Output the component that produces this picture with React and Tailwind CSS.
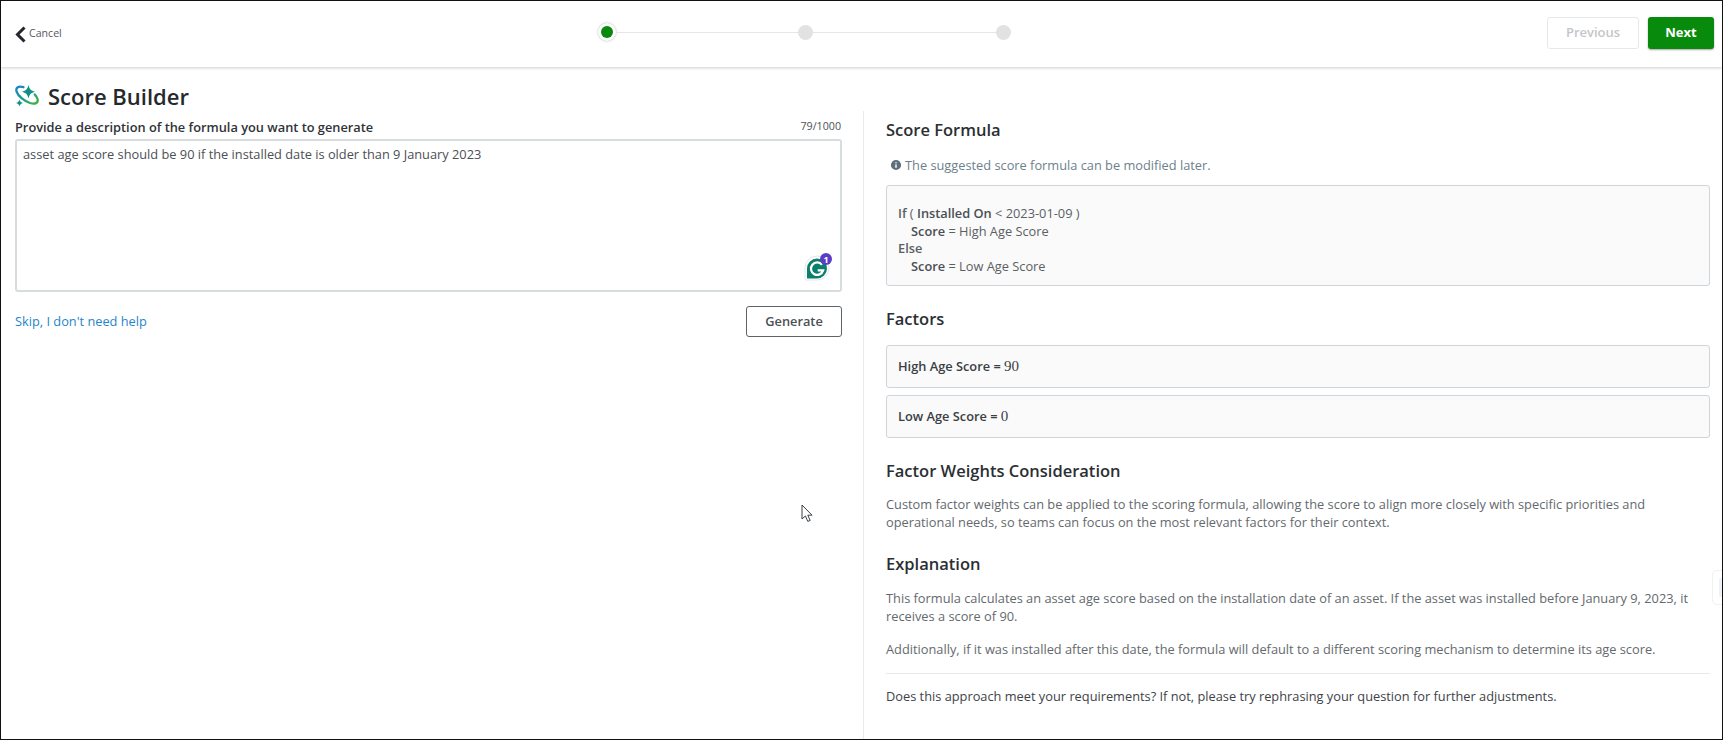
import React from 'react';
import { Info } from 'lucide-react';

const font = { fontFamily: '"Open Sans", "Noto Sans", sans-serif' };

const ScoreIcon = () => (
  <svg width="24" height="24" viewBox="0 0 24 24" className="shrink-0">
    <defs>
      <linearGradient id="ring" x1="0" y1="0" x2="1" y2="1">
        <stop offset="0" stopColor="#1b82cc" />
        <stop offset="0.5" stopColor="#17a08a" />
        <stop offset="1" stopColor="#45b03a" />
      </linearGradient>
    </defs>
    <path d="M8.5 3.2C3.5 1.4 0.4 3.6 1.6 7.6 3 12 9 17 15 19c5 1.5 8.5 0.2 7.6-3.8-.4-1.6-1.4-3.2-2.8-4.8" fill="none" stroke="url(#ring)" strokeWidth="2.3" strokeLinecap="round" />
    <path d="M13.5 1c.7 3.8 2.4 5.7 6.5 6.8-4 1-5.8 3-6.5 6.7-.8-3.7-2.5-5.7-6.5-6.7 4-1.1 5.7-3 6.5-6.8z" fill="#128f84" />
    <path d="M4.5 15.5c.4 2 1.4 3 3.5 3.5-2.1.5-3.1 1.5-3.5 3.5-.4-2-1.4-3-3.5-3.5 2.1-.5 3.1-1.5 3.5-3.5z" fill="#128f84" />
  </svg>
);

const GrammarlyBadge = () => (
  <div className="absolute bottom-[9px] right-[9px] h-[29px] w-[28px]">
    <svg width="28" height="29" viewBox="0 0 28 29">
      <path d="M2 27V16A12 12 0 0 1 26 16A12 12 0 0 1 14 28H3a1 1 0 0 1-1-1z" fill="#fff" stroke="#e3e6e8" strokeWidth="1" />
      <path d="M4 26V16.5A10 10 0 1 1 14 26.5H4.5a.5.5 0 0 1-.5-.5z" fill="#0c7f6a" />
      <path d="M19 12.8a6.2 6.2 0 1 0 1.1 5.6h-5.4" fill="none" stroke="#fff" strokeWidth="2.3" />
    </svg>
    <span className="absolute right-[-1px] top-[1px] flex h-[12px] w-[12px] items-center justify-center rounded-full bg-[#5a3fc6] text-[9px] font-bold leading-none text-white">1</span>
  </div>
);

const Heading = ({ children, className = '' }) => (
  <h2 className={`text-[16.5px] font-semibold leading-[22px] text-[#2b2f33] ${className}`}>{children}</h2>
);

const FactorBox = ({ label, value }) => (
  <div className="flex h-[43px] items-center rounded-[3px] border border-[#ced4d9] bg-[#fafafa] px-[11px] text-[12.8px] font-semibold text-[#3a3f44]">
    {label} =&nbsp;
    <span className="text-[15px] font-normal" style={{ fontFamily: '"Liberation Serif", serif' }}>{value}</span>
  </div>
);

export default function App() {
  return (
    <div className="relative h-[740px] w-[1723px] overflow-hidden border border-[#111] bg-white" style={font}>
      {/* Header */}
      <header className="relative flex h-[66px] items-center justify-between pl-[14px] pr-[8px] shadow-[0_1px_3px_rgba(0,0,0,0.2)]">
        <div className="flex items-center text-[10.6px] text-[#55595d]">
          <svg width="11" height="17" viewBox="0 0 11 17" className="mr-[3px]">
            <path d="M9.5 1.5L2.5 8.5L9.5 15.5" fill="none" stroke="#23272b" strokeWidth="3" />
          </svg>
          Cancel
        </div>
        <div className="absolute left-[597px] top-[22px] flex items-center">
          <div className="flex h-[18px] w-[18px] items-center justify-center rounded-full bg-white shadow-[0_0_2px_rgba(0,0,0,0.35)]">
            <div className="h-[12px] w-[12px] rounded-full bg-[#088a0c]" />
          </div>
          <div className="h-[1px] w-[182px] bg-[#e6e6e6]" />
          <div className="h-[15px] w-[15px] rounded-full bg-[#e2e2e2]" />
          <div className="h-[1px] w-[183px] bg-[#e6e6e6]" />
          <div className="h-[15px] w-[15px] rounded-full bg-[#e2e2e2]" />
        </div>
        <div className="mt-[-2px] flex items-center gap-[9px]">
          <button className="h-[32px] w-[92px] rounded-[3px] border border-[#e6e8ea] bg-white text-[13px] font-semibold text-[#c4c6c8]">Previous</button>
          <button className="h-[32px] w-[66px] rounded-[3px] bg-[#088a0c] text-[13px] font-bold text-white shadow-[0_1px_2px_rgba(0,0,0,0.35)]">Next</button>
        </div>
      </header>

      <div className="flex h-[672px]">
        {/* Left panel */}
        <section className="w-[862px] shrink-0 pl-[14px]">
          <div className="flex h-[44px] items-center gap-[9px] pt-[14px]">
            <ScoreIcon />
            <h1 className="text-[22px] font-semibold leading-none text-[#25292d]">Score Builder</h1>
          </div>
          <div className="w-[827px]">
            <div className="flex items-end justify-between pt-[7px]">
              <label className="text-[12.8px] font-semibold leading-[18px] text-[#2f3337]">Provide a description of the formula you want to generate</label>
              <span className="mb-[2px] mr-[1px] text-[10.7px] leading-[16px] text-[#4c5055]">79/1000</span>
            </div>
            <div className="relative mt-[3px] h-[153px] rounded-[3px] border-2 border-[#d7dcdf] px-[6px] py-[4px] text-[12.8px] leading-[18px] text-[#4b5055]">
              asset age score should be 90 if the installed date is older than 9 January 2023
              <GrammarlyBadge />
            </div>
            <div className="mt-[14px] flex items-center justify-between">
              <a className="text-[12.8px] text-[#1f85c9]">Skip, I don't need help</a>
              <button className="h-[31px] w-[96px] rounded-[3px] border border-[#5d6368] bg-white text-[12.8px] font-semibold text-[#4b5055]">Generate</button>
            </div>
          </div>
        </section>

        {/* Right panel */}
        <section className="mt-[44px] flex-1 border-l border-[#e8eaec] pl-[22px] pr-[12px]">
          <Heading className="mt-[8px]">Score Formula</Heading>
          <p className="mt-[14px] flex items-center pl-[3px] text-[12.8px] leading-[20px] text-[#6d7f8c]">
            <Info size={14} fill="#5c6f7d" stroke="#fff" strokeWidth={2.5} className="mr-[2px]" />
            The suggested score formula can be modified later.
          </p>
          <div className="mt-[10px] h-[101px] rounded-[3px] border border-[#ced4d9] bg-[#fafafa] px-[11px] pt-[19px] text-[12.8px] leading-[17.5px] text-[#5a5f64]">
            <div><b className="font-semibold">If</b> ( <b className="font-semibold text-[#4a4f54]">Installed On</b> &lt; 2023-01-09 )</div>
            <div className="pl-[13px]"><b className="font-semibold text-[#4a4f54]">Score</b> = High Age Score</div>
            <div className="font-semibold">Else</div>
            <div className="pl-[13px]"><b className="font-semibold text-[#4a4f54]">Score</b> = Low Age Score</div>
          </div>

          <Heading className="mt-[22px]">Factors</Heading>
          <div className="mt-[15px] flex flex-col gap-[7px]">
            <FactorBox label="High Age Score" value="90" />
            <FactorBox label="Low Age Score" value="0" />
          </div>

          <Heading className="mt-[22px]">Factor Weights Consideration</Heading>
          <p className="mt-[14px] text-[12.8px] leading-[17.6px] text-[#64696e]">
            Custom factor weights can be applied to the scoring formula, allowing the score to align more closely with specific priorities and operational needs, so teams can focus on the most relevant factors for their context.
          </p>

          <Heading className="mt-[22px]">Explanation</Heading>
          <p className="mt-[15px] text-[12.8px] leading-[17.6px] text-[#64696e]">
            This formula calculates an asset age score based on the installation date of an asset. If the asset was installed before January 9, 2023, it receives a score of 90.
          </p>
          <p className="mt-[15.5px] text-[12.8px] leading-[17.6px] text-[#64696e]">
            Additionally, if it was installed after this date, the formula will default to a different scoring mechanism to determine its age score.
          </p>
          <div className="mt-[15px] border-t border-[#e8eaec] pt-[13px] text-[12.8px] leading-[18px] text-[#3e4348]">
            Does this approach meet your requirements? If not, please try rephrasing your question for further adjustments.
          </div>
        </section>
      </div>

      {/* Mouse pointer */}
      <svg className="absolute left-[800px] top-[503px]" width="14" height="20" viewBox="0 0 14 20">
        <path d="M1 1v14l3.4-3 2.4 5.4 2.4-1-2.4-5.2H11z" fill="#fff" stroke="#3a3f44" strokeWidth="1" />
      </svg>
      {/* Clipped side widget */}
      <div className="absolute left-[1711px] top-[569px] h-[35px] w-[14px] rounded-l-[5px] border border-[#f0f1f3] bg-white">
        <div className="ml-[6px] mt-[7px] h-[19px] w-[6px] rounded-l-[2px] bg-[#eef1f8]" />
      </div>
    </div>
  );
}
